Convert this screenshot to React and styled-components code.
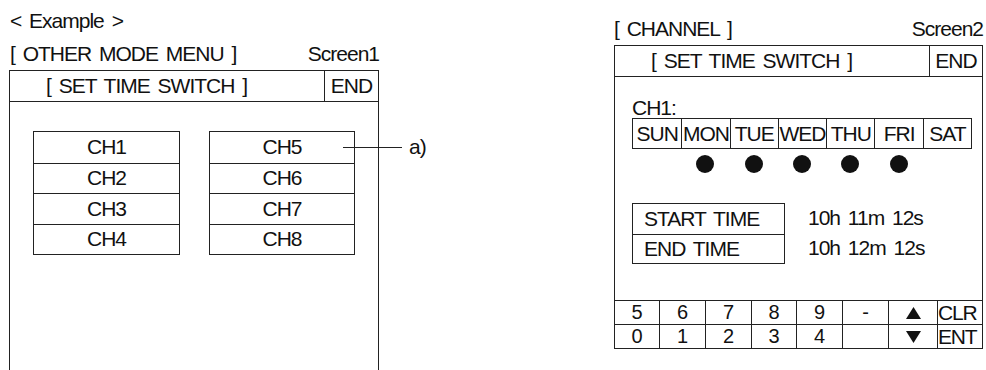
import React from "react";
import styled, { createGlobalStyle } from "styled-components";

const LINE = "#222";

const Global = createGlobalStyle`
  *, *::before, *::after { box-sizing: border-box; }
  html, body { margin: 0; padding: 0; background: #fff; overflow: hidden; }
  body {
    font-family: "Liberation Sans", Arial, Helvetica, sans-serif;
    color: #111;
    font-size: 21px;
    letter-spacing: -1px;
    word-spacing: 3px;
  }
`;

const Page = styled.div`
  display: flex;
  align-items: flex-start;
  gap: 235px;
  padding-left: 9px;
`;

const Figure = styled.section`
  display: flex;
  flex-direction: column;
  width: ${(p) => p.$w}px;
  padding-top: ${(p) => p.$top}px;
`;

const Caption = styled.div`
  line-height: 24px;
  padding-left: 1px;
  margin-bottom: 9px;
  white-space: nowrap;
`;

const TitleRow = styled.div`
  display: flex;
  justify-content: space-between;
  line-height: 24px;
  margin-bottom: 4px;
  padding-left: ${(p) => p.$pl || 0}px;
  white-space: nowrap;
`;

const Panel = styled.div`
  display: flex;
  flex-direction: column;
  height: ${(p) => p.$h}px;
  border: 1px solid ${LINE};
  ${(p) => (p.$open ? "border-bottom: none;" : "")}
`;

const Header = styled.div`
  display: flex;
  height: 31px;
  border-bottom: 1px solid ${LINE};
  white-space: nowrap;
`;

const HeaderTitle = styled.div`
  flex: 1;
  display: flex;
  align-items: center;
  padding-left: 36px;
`;

const HeaderEnd = styled.div`
  width: ${(p) => p.$w}px;
  border-left: 1px solid ${LINE};
  display: flex;
  align-items: center;
  justify-content: center;
`;

/* ---------- Screen 1 ---------- */

const MenuBody = styled.div`
  display: flex;
  align-items: flex-start;
  gap: 29px;
  padding: 29px 0 0 23px;
`;

const ChannelColumn = styled.div`
  display: flex;
  flex-direction: column;
  width: ${(p) => p.$w}px;
  border: 1px solid ${LINE};
`;

const ChannelCell = styled.div`
  position: relative;
  height: 30.5px;
  display: flex;
  align-items: center;
  justify-content: center;
  & + & { border-top: 1px solid ${LINE}; }
`;

const Callout = styled.div`
  position: absolute;
  left: 133px;
  top: 50%;
  transform: translateY(-50%);
  display: flex;
  align-items: center;
  gap: 7px;
  white-space: nowrap;
`;

const CalloutLine = styled.span`
  display: block;
  width: 59px;
  height: 1px;
  background: ${LINE};
`;

/* ---------- Screen 2 ---------- */

const ChannelBody = styled.div`
  flex: 1;
  display: flex;
  flex-direction: column;
  align-items: flex-start;
  padding: 21px 0 0 17px;
`;

const ChannelLabel = styled.div`
  line-height: 20px;
`;

const DayGrid = styled.div`
  display: grid;
  grid-template-columns: repeat(7, 1fr);
  width: 340px;
`;

const DayTable = styled(DayGrid)`
  height: 31px;
  border: 1px solid ${LINE};
`;

const DayCell = styled.div`
  display: flex;
  align-items: center;
  justify-content: center;
  white-space: nowrap;
  & + & { border-left: 1px solid ${LINE}; }
`;

const DotRow = styled(DayGrid)`
  height: 18px;
  margin-top: 6px;
  padding: 0 1px;
`;

const DotSlot = styled.div`
  display: flex;
  justify-content: center;
`;

const Dot = styled.span`
  display: block;
  width: 18px;
  height: 18px;
  border-radius: 50%;
  background: #111;
`;

const TimeSection = styled.div`
  display: flex;
  margin-top: 30px;
`;

const TimeBox = styled.div`
  display: grid;
  grid-template-rows: 1fr 1fr;
  width: 153px;
  height: 61px;
  border: 1px solid ${LINE};
`;

const TimeLabel = styled.div`
  display: flex;
  align-items: center;
  padding-left: 11px;
  white-space: nowrap;
  & + & { border-top: 1px solid ${LINE}; }
`;

const TimeValues = styled.div`
  display: flex;
  flex-direction: column;
  margin-left: 23px;
`;

const TimeValue = styled.div`
  height: 30px;
  line-height: 30px;
  white-space: nowrap;
`;

const Keypad = styled.div`
  display: grid;
  grid-template-columns: 44px 46px 46px 45px 46px 46px 49px 1fr;
  grid-template-rows: 23px 24px;
  border-top: 1px solid ${LINE};
`;

const Key = styled.div`
  display: flex;
  align-items: center;
  justify-content: ${(p) => (p.$label ? "flex-start" : "center")};
  font-size: ${(p) => (p.$label ? 21 : 20)}px;
  letter-spacing: ${(p) => (p.$label ? -1.2 : 0)}px;
  white-space: nowrap;
  ${(p) => (p.$col > 0 ? `border-left: 1px solid ${LINE};` : "")}
  ${(p) => (p.$row > 0 ? `border-top: 1px solid ${LINE};` : "")}
`;

const Arrow = ({ down }) => (
  <svg width="15" height="12" viewBox="0 0 15 12" aria-hidden="true">
    <polygon points={down ? "0,0 15,0 7.5,12" : "7.5,0 15,12 0,12"} fill="#111" />
  </svg>
);

const DAYS = [
  { name: "SUN", on: false },
  { name: "MON", on: true },
  { name: "TUE", on: true },
  { name: "WED", on: true },
  { name: "THU", on: true },
  { name: "FRI", on: true },
  { name: "SAT", on: false },
];

const KEYS = [
  ["5", "6", "7", "8", "9", "-", "up", "CLR"],
  ["0", "1", "2", "3", "4", "", "down", "ENT"],
];

function renderKey(k) {
  if (k === "up") return <Arrow />;
  if (k === "down") return <Arrow down />;
  return k;
}

export default function App() {
  const left = ["CH1", "CH2", "CH3", "CH4"];
  const right = ["CH5", "CH6", "CH7", "CH8"];
  return (
    <>
      <Global />
      <Page>
        <Figure $w={370} $top={9}>
          <Caption>&lt; Example &gt;</Caption>
          <TitleRow $pl={1}>
            <span>[ OTHER MODE MENU ]</span>
            <span>Screen1</span>
          </TitleRow>
          <Panel $h={310} $open>
            <Header>
              <HeaderTitle>[ SET TIME SWITCH ]</HeaderTitle>
              <HeaderEnd $w={54}>END</HeaderEnd>
            </Header>
            <MenuBody>
              <ChannelColumn $w={147}>
                {left.map((c) => (
                  <ChannelCell key={c}>{c}</ChannelCell>
                ))}
              </ChannelColumn>
              <ChannelColumn $w={146}>
                {right.map((c, i) => (
                  <ChannelCell key={c}>
                    {c}
                    {i === 0 && (
                      <Callout>
                        <CalloutLine />
                        <span>a)</span>
                      </Callout>
                    )}
                  </ChannelCell>
                ))}
              </ChannelColumn>
            </MenuBody>
          </Panel>
        </Figure>

        <Figure $w={369} $top={17}>
          <TitleRow>
            <span>[ CHANNEL ]</span>
            <span>Screen2</span>
          </TitleRow>
          <Panel $h={304}>
            <Header>
              <HeaderTitle>[ SET TIME SWITCH ]</HeaderTitle>
              <HeaderEnd $w={53}>END</HeaderEnd>
            </Header>
            <ChannelBody>
              <ChannelLabel>CH1:</ChannelLabel>
              <DayTable>
                {DAYS.map((d) => (
                  <DayCell key={d.name}>{d.name}</DayCell>
                ))}
              </DayTable>
              <DotRow>
                {DAYS.map((d) => (
                  <DotSlot key={d.name}>{d.on && <Dot />}</DotSlot>
                ))}
              </DotRow>
              <TimeSection>
                <TimeBox>
                  <TimeLabel>START TIME</TimeLabel>
                  <TimeLabel>END TIME</TimeLabel>
                </TimeBox>
                <TimeValues>
                  <TimeValue>10h 11m 12s</TimeValue>
                  <TimeValue>10h 12m 12s</TimeValue>
                </TimeValues>
              </TimeSection>
            </ChannelBody>
            <Keypad>
              {KEYS.map((row, r) =>
                row.map((k, c) => (
                  <Key key={`${r}-${c}`} $row={r} $col={c} $label={k.length === 3}>
                    {renderKey(k)}
                  </Key>
                ))
              )}
            </Keypad>
          </Panel>
        </Figure>
      </Page>
    </>
  );
}
